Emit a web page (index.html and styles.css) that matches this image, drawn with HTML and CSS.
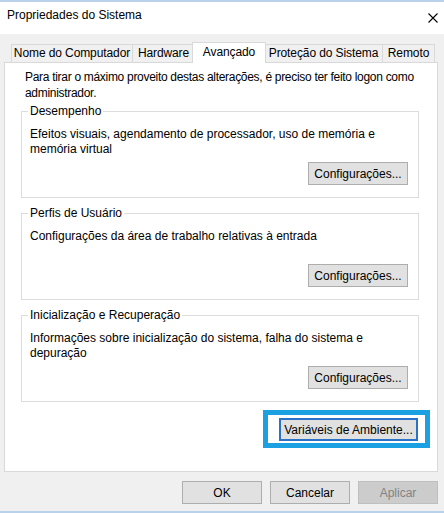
FILE: index.html
```html
<!DOCTYPE html>
<html lang="pt-BR">
<head>
<meta charset="utf-8">
<title>Propriedades do Sistema</title>
<link rel="stylesheet" href="styles.css">
</head>
<body>
<div class="window">
  <div class="titlebar">
    <span class="title">Propriedades do Sistema</span>
    <svg class="close" width="10" height="10" viewBox="0 0 10 10"><path d="M0.5 0.5 L9.5 9.5 M9.5 0.5 L0.5 9.5" stroke="#000" stroke-width="1.1" fill="none"/></svg>
  </div>
  <div class="content">
    <div class="tabs">
      <div class="tab tab-nome">Nome do Computador</div>
      <div class="tab tab-hw">Hardware</div>
      <div class="tab tab-av selected">Avançado</div>
      <div class="tab tab-prot">Proteção do Sistema</div>
      <div class="tab tab-rem">Remoto</div>
    </div>
    <div class="panel">
      <p class="intro">Para tirar o máximo proveito destas alterações, é preciso ter feito logon como administrador.</p>

      <fieldset class="group first">
        <legend>Desempenho</legend>
        <div class="group-body">
          <p class="desc">Efeitos visuais, agendamento de processador, uso de memória e memória virtual</p>
          <button class="btn btn-config">Configurações...</button>
        </div>
      </fieldset>

      <fieldset class="group">
        <legend>Perfis de Usuário</legend>
        <div class="group-body">
          <p class="desc">Configurações da área de trabalho relativas à entrada</p>
          <button class="btn btn-config">Configurações...</button>
        </div>
      </fieldset>

      <fieldset class="group">
        <legend>Inicialização e Recuperação</legend>
        <div class="group-body">
          <p class="desc">Informações sobre inicialização do sistema, falha do sistema e depuração</p>
          <button class="btn btn-config">Configurações...</button>
        </div>
      </fieldset>

      <div class="highlight">
        <button class="btn btn-env">Variáveis de Ambiente...</button>
      </div>
    </div>
    <div class="actions">
      <button class="btn btn-action">OK</button>
      <button class="btn btn-action">Cancelar</button>
      <button class="btn btn-action disabled">Aplicar</button>
    </div>
  </div>
</div>
</body>
</html>
```

FILE: styles.css
```css
* { box-sizing: border-box; }

html, body {
  margin: 0;
  padding: 0;
  background: #f0f0f0;
}

body {
  font-family: "Liberation Sans", Arial, sans-serif;
  font-size: 12px;
  color: #000;
}

.window {
  width: 444px;
  height: 513px;
  border-top: 2px solid #b9d1ea;
  border-bottom: 2px solid #b9d1ea;
  background: #f0f0f0;
  display: flex;
  flex-direction: column;
}

.titlebar {
  height: 32px;
  background: #fff;
  display: flex;
  justify-content: space-between;
  align-items: flex-start;
  padding: 6px 6px 0 7px;
  line-height: 15px;
}

.title {
  font-size: 12px;
}

.close {
  margin-top: 5px;
}

.content {
  flex: 1;
  padding-top: 8px;
}

.tabs {
  display: flex;
  align-items: flex-end;
  height: 20px;
  margin-left: 11px;
  position: relative;
  z-index: 2;
}

.tab {
  height: 18px;
  line-height: 17px;
  text-align: center;
  border: 1px solid #d9d9d9;
  border-bottom: none;
  background: #f0f0f0;
  white-space: nowrap;
  letter-spacing: -0.1px;
}

.tab-nome { width: 122px; }
.tab-hw { width: 63px; margin-left: -1px; }
.tab-av { width: 71px; margin-left: -1px; }
.tab-prot { width: 119px; }
.tab-rem { width: 53px; margin-left: -1px; }

.tab.selected {
  width: 74px;
  height: 21px;
  margin-left: -3px;
  margin-right: -2px;
  margin-bottom: -1px;
  background: #fff;
  line-height: 18px;
  position: relative;
  z-index: 3;
}

.panel {
  margin-left: 4px;
  width: 434px;
  height: 410px;
  background: #fff;
  border: 1px solid #d9d9d9;
  padding: 6px 0 0 16px;
  display: flex;
  flex-direction: column;
  align-items: flex-start;
}

.intro {
  margin: 0;
  padding-left: 4px;
  width: 404px;
  line-height: 16px;
  letter-spacing: -0.3px;
}

.group {
  width: 398px;
  margin: 8px 0 0 0;
  padding: 8px 10px 12px 8px;
  border: 1px solid #dcdcdc;
  min-width: 0;
}

.group.first {
  margin-top: 3px;
}

.group legend {
  padding: 0 2px;
  margin-left: -2px;
  line-height: 15px;
}

.group-body {
  height: 58px;
  display: flex;
  flex-direction: column;
  justify-content: space-between;
}

.desc {
  margin: 0;
  line-height: 15px;
  width: 370px;
}

.btn {
  font-family: "Liberation Sans", Arial, sans-serif;
  font-size: 12px;
  color: #000;
  background: #e1e1e1;
  border: 1px solid #adadad;
  height: 23px;
  padding: 0;
  border-radius: 0;
}

.btn-config {
  width: 100px;
  align-self: flex-end;
}

.highlight {
  align-self: flex-end;
  margin: 8px 7px 0 0;
  border: 5px solid #1ba1e2;
  padding: 3px 7px 2px 11px;
  background: #fff;
}

.btn-env {
  width: 139px;
  display: block;
  border: 2px solid #2a72c8;
}

.actions {
  display: flex;
  justify-content: flex-end;
  gap: 8px;
  padding-right: 6px;
  margin-top: 9px;
}

.btn-action {
  width: 80px;
}

.btn-action.disabled {
  background: #cccccc;
  border-color: #bfbfbf;
  color: #838383;
}
```
